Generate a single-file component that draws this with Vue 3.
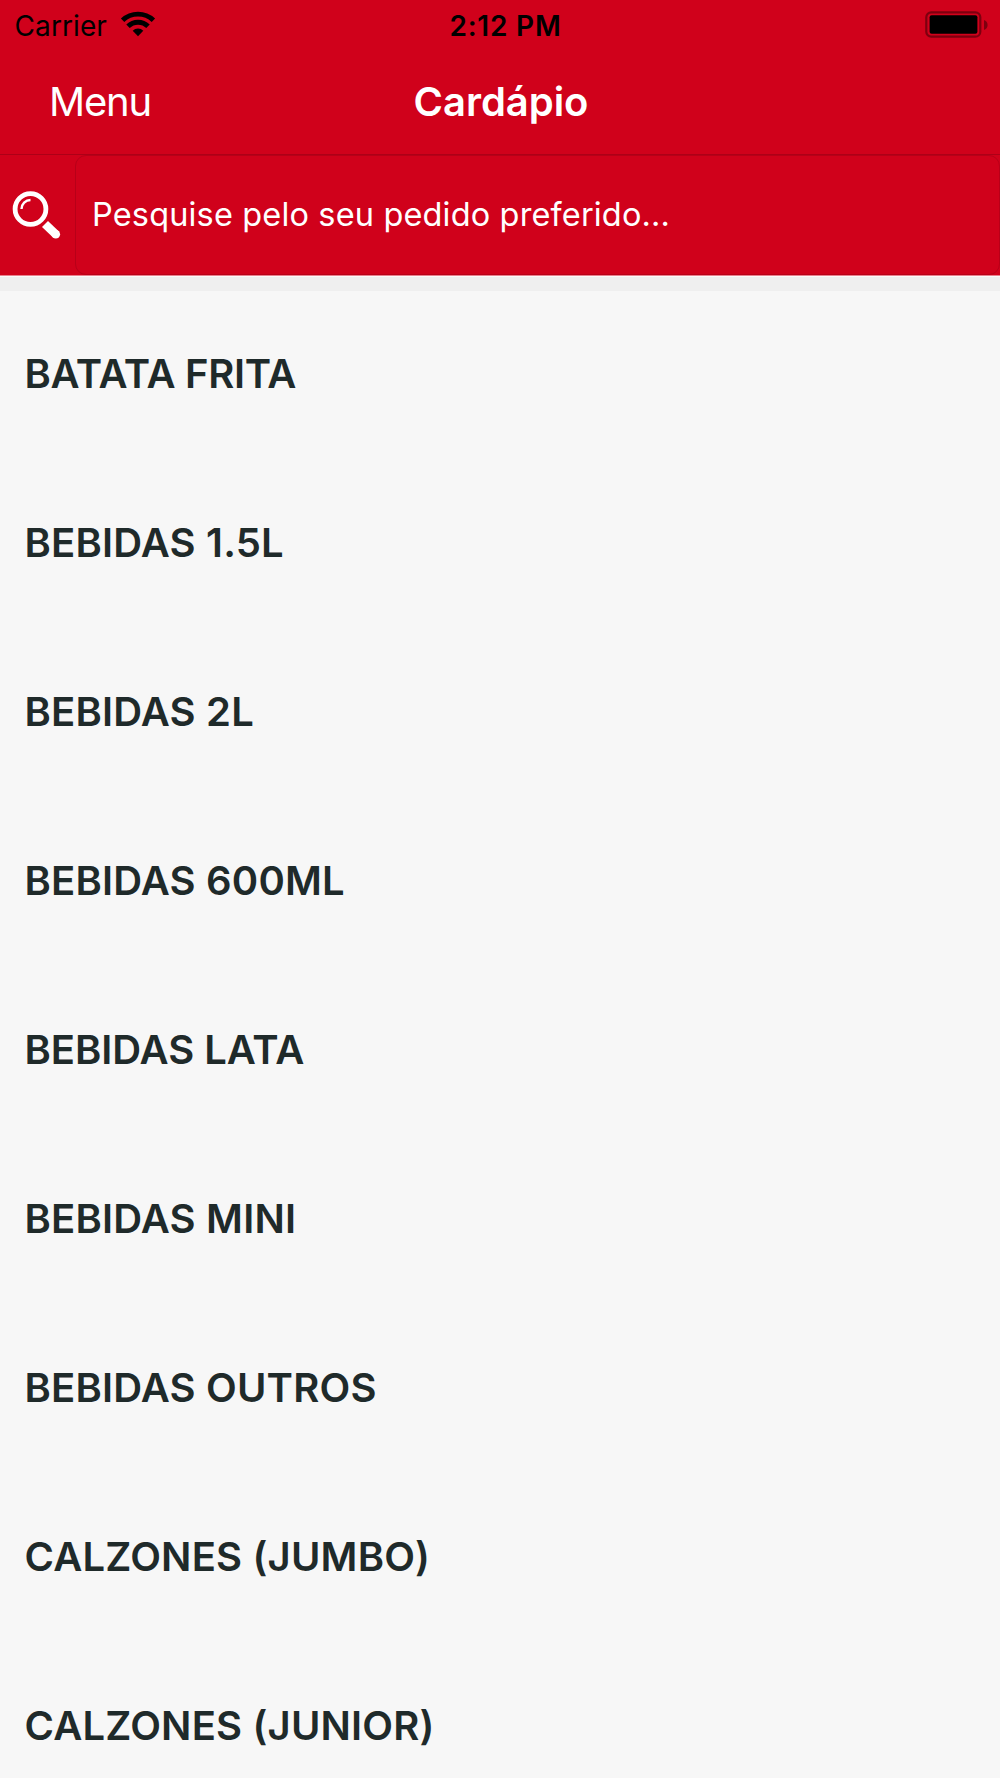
<script setup>
const categories = [
  { name: 'BATATA FRITA', fit: 'tight' },
  { name: 'BEBIDAS 1.5L' },
  { name: 'BEBIDAS 2L' },
  { name: 'BEBIDAS 600ML' },
  { name: 'BEBIDAS LATA', fit: 'snug' },
  { name: 'BEBIDAS MINI' },
  { name: 'BEBIDAS OUTROS' },
  { name: 'CALZONES (JUMBO)' },
  { name: 'CALZONES (JUNIOR)' },
]
</script>

<template>
  <div class="screen">
    <header class="top">
      <div class="status">
        <div class="carrier">
          <span class="carrier-name">Carrier</span>
          <svg class="wifi" width="36" height="26" viewBox="0 0 36 26">
            <g fill="none" stroke="#000" stroke-width="4.9">
              <path d="M2.600 9.300a22.400 22.400 0 0 1 30.800 0" />
              <path d="M8 15.300a14.200 14.200 0 0 1 20 0" />
            </g>
            <path d="M18 25.200l-5.300-5.400a7.500 7.500 0 0 1 10.600 0z" />
          </svg>
        </div>
        <span class="time">2:12 PM</span>
        <div class="battery">
          <svg width="64" height="28" viewBox="0 0 64 28">
            <rect x="1.3" y="1.3" width="54" height="24.4" rx="5" fill="none" stroke="#7d000f" stroke-width="2.2" />
            <rect x="4.6" y="4.3" width="47.8" height="18.4" rx="2" />
            <path d="M59 9c2 .7 3.6 2.500 3.600 5s-1.600 4.300-3.600 5z" fill="#7d000f" />
          </svg>
        </div>
      </div>
      <nav class="nav">
        <span class="menu">Menu</span>
        <h1 class="title">Cardápio</h1>
        <span></span>
      </nav>
    </header>
    <div class="search">
      <div class="search-icon">
        <svg width="50" height="50" viewBox="0 0 50 50">
          <circle cx="19.5" cy="19" r="15.400" fill="none" stroke="#fff" stroke-width="4.800" />
          <path d="M10.500 19a9 9 0 0 1 9-9" fill="none" stroke="#fff" stroke-width="2.400" />
          <path d="M34 34l11 10.500" stroke="#fff" stroke-width="8.600" />
          <circle cx="44.800" cy="44.300" r="4.300" fill="#fff" />
        </svg>
      </div>
      <div class="field"><span class="placeholder">Pesquise pelo seu pedido preferido...</span></div>
    </div>
    <div class="gap"></div>
    <ul class="list">
      <li v-for="item in categories" :key="item.name" class="row" :class="item.fit">
        <span>{{ item.name }}</span>
      </li>
    </ul>
  </div>
</template>

<style>
body {
  background: #f7f7f7;
}
</style>

<style scoped>
.screen {
  width: 1000px;
  height: 1778px;
  overflow: hidden;
  display: flex;
  flex-direction: column;
  background: #f7f7f7;
  font-family: Inter, 'Liberation Sans', sans-serif;
}
.top {
  height: 154px;
  flex: none;
  background: #d0011b;
  border-bottom: 1px solid #ad0017;
}
.status {
  height: 52px;
  display: grid;
  grid-template-columns: 1fr auto 1fr;
  color: #000;
  font-size: 28px;
  line-height: 52px;
}
.carrier {
  display: flex;
  padding-left: 14.5px;
}
.carrier-name {
  width: 105px;
  letter-spacing: 0.1px;
}
.wifi {
  margin-top: 11px;
}
.time {
  padding-left: 11px;
  font-weight: 600;
  letter-spacing: 0.8px;
}
.battery {
  display: flex;
  justify-content: flex-end;
  padding: 11px 11px 0 0;
}
.nav {
  height: 100px;
  display: grid;
  grid-template-columns: 1fr auto 1fr;
  color: #fff;
  font-size: 40px;
  line-height: 100px;
}
.menu {
  padding-left: 49px;
  letter-spacing: -1.2px;
}
.title {
  margin: 0;
  padding-left: 2px;
  font-size: 40px;
  font-weight: 600;
  letter-spacing: -0.05px;
}
.search {
  height: 120px;
  flex: none;
  display: flex;
  background: #d0011b;
  border-bottom: 1px solid #e9808d;
}
.search-icon {
  width: 75px;
  padding: 35px 0 0 11px;
  box-sizing: border-box;
}
.field {
  flex: 1;
  display: flex;
  align-items: center;
  padding: 0 0 1px 16px;
  border: 1px solid #b80018;
  border-radius: 11px;
  color: #fff;
  font-size: 32.5px;
  letter-spacing: 0.15px;
}
.gap {
  height: 14px;
  flex: none;
  background: #efefef;
  border-top: 1px solid #fafafa;
}
.list {
  margin: -2.4px 0 0;
  padding: 0;
  list-style: none;
}
.row {
  height: 169.07px;
  display: flex;
  align-items: center;
  padding-left: 24.5px;
  color: #1f2a2a;
  font-size: 40px;
  font-weight: 600;
  letter-spacing: 0.18px;
  white-space: nowrap;
}
.row.tight {
  letter-spacing: -0.3px;
}
.row.snug {
  letter-spacing: -0.05px;
}
</style>
